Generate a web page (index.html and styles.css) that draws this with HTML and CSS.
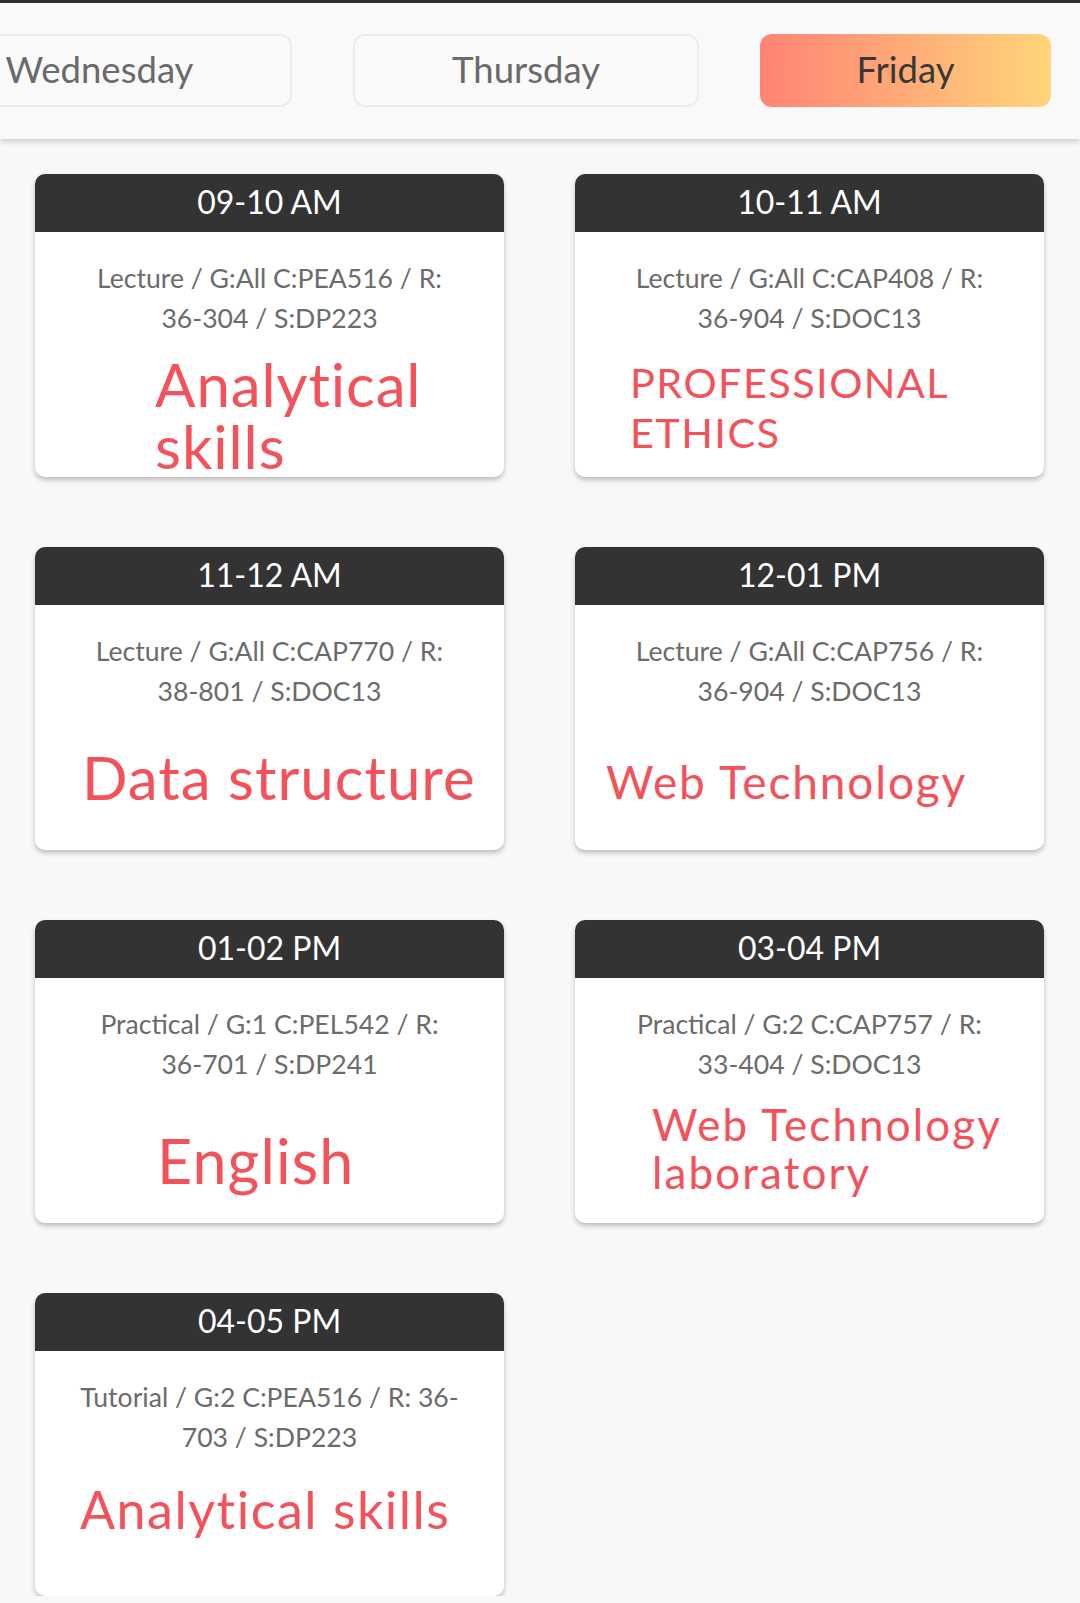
FILE: index.html
```html
<!DOCTYPE html>
<html lang="en">
<head>
<meta charset="utf-8">
<title>Timetable - Friday</title>
<link rel="stylesheet" href="styles.css">
</head>
<body>
<div class="topline"></div>
<header class="daybar">
  <nav class="days">
    <div class="day day--wed">Wednesday</div>
    <div class="day day--thu">Thursday</div>
    <div class="day day--fri is-active">Friday</div>
  </nav>
</header>
<main class="grid">
  <section class="card">
    <div class="card-time">09-10 AM</div>
    <div class="card-body">
      <p class="info">Lecture / G:All C:PEA516 / R:<br>36-304 / S:DP223</p>
      <h2 class="subject subject--1">Analytical skills</h2>
    </div>
  </section>
  <section class="card">
    <div class="card-time">10-11 AM</div>
    <div class="card-body">
      <p class="info">Lecture / G:All C:CAP408 / R:<br>36-904 / S:DOC13</p>
      <h2 class="subject subject--2">PROFESSIONAL ETHICS</h2>
    </div>
  </section>
  <section class="card">
    <div class="card-time">11-12 AM</div>
    <div class="card-body">
      <p class="info">Lecture / G:All C:CAP770 / R:<br>38-801 / S:DOC13</p>
      <h2 class="subject subject--3">Data structure</h2>
    </div>
  </section>
  <section class="card">
    <div class="card-time">12-01 PM</div>
    <div class="card-body">
      <p class="info">Lecture / G:All C:CAP756 / R:<br>36-904 / S:DOC13</p>
      <h2 class="subject subject--4">Web Technology</h2>
    </div>
  </section>
  <section class="card">
    <div class="card-time">01-02 PM</div>
    <div class="card-body">
      <p class="info">Practical / G:1 C:PEL542 / R:<br>36-701 / S:DP241</p>
      <h2 class="subject subject--5">English</h2>
    </div>
  </section>
  <section class="card">
    <div class="card-time">03-04 PM</div>
    <div class="card-body">
      <p class="info">Practical / G:2 C:CAP757 / R:<br>33-404 / S:DOC13</p>
      <h2 class="subject subject--6">Web Technology laboratory</h2>
    </div>
  </section>
  <section class="card">
    <div class="card-time">04-05 PM</div>
    <div class="card-body">
      <p class="info">Tutorial / G:2 C:PEA516 / R: 36-<br>703 / S:DP223</p>
      <h2 class="subject subject--7">Analytical skills</h2>
    </div>
  </section>
</main>
</body>
</html>
```
FILE: styles.css
```css
* { box-sizing: border-box; }

html, body {
  margin: 0;
  padding: 0;
  background: #f8f8f8;
  font-family: "Lato", "Noto Sans", "Liberation Sans", sans-serif;
  overflow: hidden;
}

.topline {
  height: 3px;
  background: #303030;
}

.daybar {
  position: relative;
  z-index: 2;
  height: 136px;
  padding-top: 31px;
  background: #f9f9f9;
  box-shadow: 0 3px 6px rgba(0, 0, 0, 0.16);
  overflow: hidden;
}

.days {
  display: flex;
  align-items: flex-start;
  gap: 61px;
  margin-left: -93px;
}

.day {
  height: 73px;
  padding-bottom: 4px;
  border: 2px solid #ececec;
  border-radius: 12px;
  background: #fafafa;
  color: #6a6a6a;
  font-size: 36.5px;
  display: flex;
  align-items: center;
  justify-content: center;
  flex: none;
}

.day--wed { width: 385px; }
.day--thu { width: 346px; }
.day--fri { width: 291px; }

.day.is-active {
  border-color: transparent;
  background: linear-gradient(90deg, #ff8473 0%, #ffa777 45%, #ffd57a 100%);
  background-origin: border-box;
  color: #383838;
}

.grid {
  display: grid;
  grid-template-columns: repeat(2, 469px);
  grid-auto-rows: 303px;
  column-gap: 71px;
  row-gap: 70px;
  padding: 35px 0 0 35px;
}

.card {
  background: #ffffff;
  border-radius: 10px;
  box-shadow: 0 3px 5px rgba(0, 0, 0, 0.24);
  display: flex;
  flex-direction: column;
}

.card-time {
  height: 58px;
  padding-bottom: 4px;
  flex: none;
  background: #333333;
  border-radius: 10px 10px 0 0;
  color: #ffffff;
  font-size: 32px;
  display: flex;
  align-items: center;
  justify-content: center;
}

.card-body {
  padding: 26px 42px 0;
}

.info {
  margin: 0 -12px;
  font-size: 26.6px;
  line-height: 40px;
  color: #6b6b6b;
  text-align: center;
}

.subject {
  margin: 0 -42px 0 0;
  font-weight: 400;
  color: #f4525a;
  text-align: left;
}

.subject--1 { font-size: 60px; line-height: 62px; letter-spacing: 0.9px; margin-top: 15px; margin-left: 78px; }
.subject--2 { font-size: 41.5px; line-height: 50px; letter-spacing: 1.4px; margin-top: 19px; margin-left: 13px; }
.subject--3 { font-size: 60px; line-height: 70px; letter-spacing: 1px; margin-top: 31px; margin-left: 5px; }
.subject--4 { font-size: 46px; line-height: 54px; letter-spacing: 1.85px; margin-top: 44px; margin-left: -11px; }
.subject--5 { font-size: 61px; line-height: 70px; letter-spacing: 1.1px; margin-top: 42px; margin-left: 80px; }
.subject--6 { font-size: 44px; line-height: 48px; letter-spacing: 2.1px; margin-top: 16px; margin-left: 35px; }
.subject--7 { font-size: 52px; line-height: 60px; letter-spacing: 1.5px; margin-top: 22px; margin-left: 3px; }
```
